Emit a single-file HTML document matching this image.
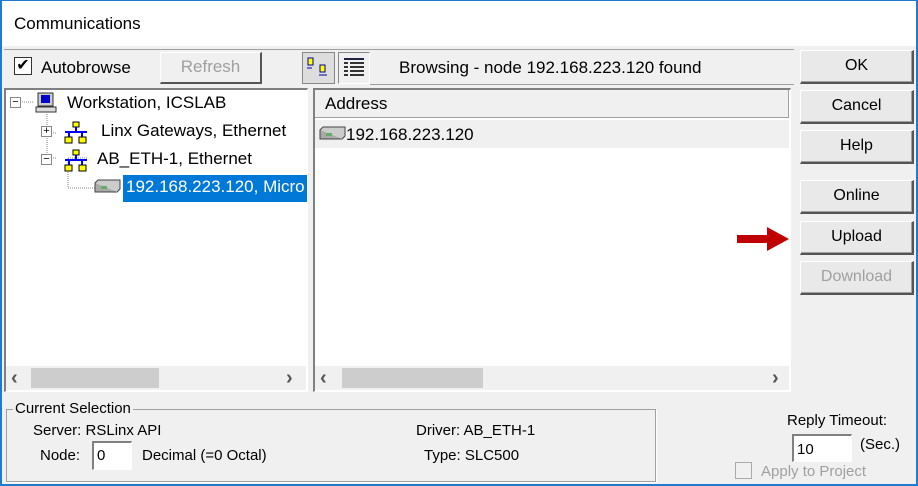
<!DOCTYPE html>
<html><head><meta charset="utf-8"><style>
*{box-sizing:border-box;margin:0;padding:0}
body{width:918px;height:486px;overflow:hidden;background:#f0f0f0;font-family:"Liberation Sans",sans-serif;font-size:16px;color:#000;position:relative}
.a{position:absolute;white-space:nowrap}
.btn{position:absolute;left:800px;width:114px;height:34px;background:#e9e9e9;border:1px solid #fff;border-right:2px solid #555;border-bottom:2px solid #555;box-shadow:inset -1px -1px 0 #a0a0a0;text-align:center;line-height:30px;font-size:16px}
.sunk{position:absolute;background:#fff;border-top:2px solid #808080;border-left:2px solid #808080;border-right:1px solid #fff;border-bottom:1px solid #fff}
.sb{position:absolute;height:24px;background:#f0f0f0}
.ar{position:absolute;top:1px;font-size:20px;color:#555;font-weight:bold}
</style></head><body>
<div class="a" style="left:0;top:0;width:918px;height:46px;background:#fff;border-top:1px solid #1e7bd0"></div>
<div class="a" style="left:0;top:0;width:2px;height:486px;background:#1e7bd0"></div>
<div class="a" style="left:916px;top:0;width:2px;height:486px;background:#1e7bd0"></div>
<div class="a" style="left:0;top:484px;width:918px;height:2px;background:#1e7bd0"></div>
<div class="a" style="left:14px;top:14px;font-size:17px">Communications</div>

<div class="a" style="left:4px;top:49px;width:790px;height:1px;background:#a0a0a0"></div>
<div class="a" style="left:14px;top:57px;width:18px;height:18px;border:1px solid #333;background:#fff;font-size:16px;line-height:16px;text-align:center">✔</div>
<div class="a" style="left:41px;top:58px;font-size:17px">Autobrowse</div>
<div class="a" style="left:160px;top:52px;width:102px;height:32px;border:1px solid #fff;border-right:2px solid #555;border-bottom:2px solid #555;color:#a0a0a0;text-align:center;line-height:28px;font-size:17px">Refresh</div>
<div class="a" style="left:302px;top:52px;width:33px;height:32px;background:#ddd;border:1px solid #888"><svg width="30" height="28"><rect x="5" y="5" width="5" height="7" fill="#ff0" stroke="#009"/><rect x="17" y="12" width="5" height="7" fill="#ff0" stroke="#009"/><path d="M4 15h5M16 22h8" stroke="#009"/></svg></div>
<div class="a" style="left:338px;top:52px;width:32px;height:32px;border:1px solid #888;border-right-color:#fff;border-bottom-color:#fff"><svg width="30" height="30"><g fill="#333"><rect x="5" y="5" width="20" height="2" fill="#224"/><rect x="5" y="9" width="4" height="2"/><rect x="11" y="9" width="14" height="2"/><rect x="5" y="13" width="4" height="2"/><rect x="11" y="13" width="14" height="2"/><rect x="5" y="17" width="4" height="2"/><rect x="11" y="17" width="14" height="2"/><rect x="5" y="21" width="4" height="2"/><rect x="11" y="21" width="14" height="2"/></g></svg></div>
<div class="a" style="left:399px;top:58px;font-size:17px">Browsing - node 192.168.223.120 found</div>
<div class="a" style="left:370px;top:84px;width:424px;height:1px;background:#a0a0a0"></div>

<div class="sunk" style="left:4px;top:88px;width:304px;height:304px"></div>
<div class="a" style="left:10px;top:97px;width:11px;height:11px;border:1px solid #888;background:#fff;font-size:11px;line-height:8px;text-align:center">−</div>
<svg class="a" style="left:20px;top:90px" width="110" height="110"><g stroke="#888" stroke-dasharray="1 1" fill="none"><path d="M2 12h12M27 24v30M27 43h10M48 68h20M48 68v30M48 98h40"/><path d="M27 54v14h10"/></g></svg>
<svg class="a" style="left:35px;top:92px" width="24" height="22"><rect x="3" y="1" width="15" height="13" fill="#ccc" stroke="#333"/><rect x="6" y="3" width="9" height="8" fill="#00c"/><rect x="1" y="15" width="20" height="5" fill="#ddd" stroke="#333"/></svg>
<div class="a" style="left:67px;top:93px;font-size:17px">Workstation, ICSLAB</div>
<div class="a" style="left:41px;top:126px;width:11px;height:11px;border:1px solid #888;background:#fff;font-size:11px;line-height:9px;text-align:center">+</div>
<div class="a" style="left:41px;top:154px;width:11px;height:11px;border:1px solid #888;background:#fff;font-size:11px;line-height:8px;text-align:center">−</div>
<svg class="a" style="left:64px;top:121px" width="24" height="24"><rect x="9" y="1" width="6" height="5" fill="#ff0" stroke="#000"/><path d="M12 6v5M1 11h22M5 11v5M18 11v5" stroke="#00f" stroke-width="2"/><rect x="1" y="16" width="7" height="6" fill="#ff0" stroke="#000"/><rect x="15" y="16" width="7" height="6" fill="#ff0" stroke="#000"/></svg>
<div class="a" style="left:101px;top:121px;font-size:17px">Linx Gateways, Ethernet</div>
<svg class="a" style="left:64px;top:149px" width="24" height="24"><rect x="9" y="1" width="6" height="5" fill="#ff0" stroke="#000"/><path d="M12 6v5M1 11h22M5 11v5M18 11v5" stroke="#00f" stroke-width="2"/><rect x="1" y="16" width="7" height="6" fill="#ff0" stroke="#000"/><rect x="15" y="16" width="7" height="6" fill="#ff0" stroke="#000"/></svg>
<div class="a" style="left:97px;top:149px;font-size:17px">AB_ETH-1, Ethernet</div>
<svg class="a" style="left:93px;top:178px" width="28" height="18"><path d="M2 5h22v9H2z" fill="#aaa" stroke="#444"/><path d="M2 5l3-3h22v9l-3 3" fill="#ccc" stroke="#444"/><rect x="8" y="8" width="6" height="3" fill="#6a6"/></svg>
<div class="a" style="left:123px;top:175px;width:184px;height:27px;background:#0078d7;color:#fff;padding:2px 0 0 3px;overflow:hidden;font-size:17px">192.168.223.120, Micro</div>
<div class="sb" style="left:6px;top:366px;width:300px"><div class="ar" style="left:5px">&#8249;</div><div class="a" style="left:25px;top:2px;width:128px;height:20px;background:#cdcdcd"></div><div class="ar" style="left:280px">&#8250;</div></div>

<div class="sunk" style="left:313px;top:88px;width:478px;height:304px"></div>
<div class="a" style="left:315px;top:90px;width:474px;height:28px;background:#f0f0f0;border-bottom:1px solid #a0a0a0;border-right:1px solid #a0a0a0"></div>
<div class="a" style="left:325px;top:94px;font-size:17px">Address</div>
<div class="a" style="left:315px;top:120px;width:474px;height:28px;background:#f0f0f0"></div>
<svg class="a" style="left:318px;top:125px" width="28" height="18"><path d="M2 5h22v9H2z" fill="#aaa" stroke="#444"/><path d="M2 5l3-3h22v9l-3 3" fill="#ccc" stroke="#444"/><rect x="8" y="8" width="6" height="3" fill="#6a6"/></svg>
<div class="a" style="left:346px;top:125px;font-size:17px">192.168.223.120</div>
<div class="sb" style="left:315px;top:366px;width:474px"><div class="ar" style="left:5px">&#8249;</div><div class="a" style="left:27px;top:2px;width:141px;height:20px;background:#cdcdcd"></div><div class="ar" style="left:457px">&#8250;</div></div>

<div class="btn" style="top:50px">OK</div>
<div class="btn" style="top:90px">Cancel</div>
<div class="btn" style="top:130px">Help</div>
<div class="btn" style="top:180px">Online</div>
<div class="btn" style="top:221px">Upload</div>
<div class="btn" style="top:261px;color:#a0a0a0">Download</div>
<svg class="a" style="left:736px;top:225px" width="54" height="28"><path d="M1 10h30V2l22 12-22 12v-8H1z" fill="#c00000"/></svg>

<div class="a" style="left:6px;top:409px;width:650px;height:73px;border:1px solid #a0a0a0;box-shadow:1px 1px 0 #fff"></div>
<div class="a" style="left:13px;top:400px;background:#f0f0f0;padding:0 2px;font-size:15px">Current Selection</div>
<div class="a" style="left:33px;top:422px;font-size:15px">Server: RSLinx API</div>
<div class="a" style="left:40px;top:447px;font-size:15px">Node:</div>
<div class="sunk" style="left:92px;top:441px;width:40px;height:29px;font-size:15px;padding:4px 0 0 3px">0</div>
<div class="a" style="left:142px;top:447px;font-size:15px">Decimal (=0 Octal)</div>
<div class="a" style="left:416px;top:422px;font-size:15px">Driver: AB_ETH-1</div>
<div class="a" style="left:424px;top:447px;font-size:15px">Type: SLC500</div>
<div class="a" style="left:787px;top:412px;font-size:15px">Reply Timeout:</div>
<div class="sunk" style="left:792px;top:434px;width:60px;height:28px;font-size:15px;padding:5px 0 0 3px">10</div>
<div class="a" style="left:860px;top:436px;font-size:15px">(Sec.)</div>
<div class="a" style="left:735px;top:462px;width:17px;height:17px;border:1px solid #aaa"></div>
<div class="a" style="left:761px;top:463px;font-size:15px;color:#a0a0a0">Apply to Project</div>
</body></html>
